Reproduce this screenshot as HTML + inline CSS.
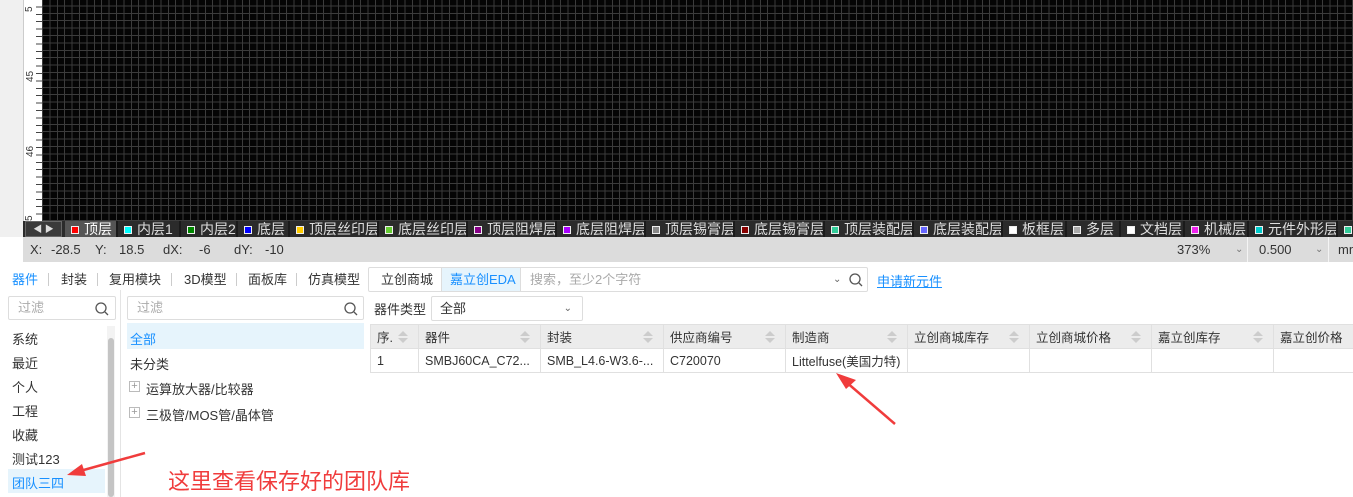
<!DOCTYPE html>
<html><head><meta charset="utf-8"><style>
*{margin:0;padding:0;box-sizing:border-box}
body{width:1353px;height:497px;overflow:hidden;background:#fff;font-family:"Liberation Sans","Noto Sans CJK SC",sans-serif;font-size:13px;color:#333;position:relative}
.a{position:absolute}
#canvas{left:42px;top:0;width:1311px;height:221px;background-color:#050505;
background-image:repeating-linear-gradient(90deg,#3c3c3c 0 1px,transparent 1px 7.4px),repeating-linear-gradient(0deg,#3c3c3c 0 1px,transparent 1px 7.4px);}
#layers{left:23px;top:221px;width:1330px;height:16px;background:#2b2b2b;color:#ddd;font-size:14px;line-height:16px;white-space:nowrap}
.t{position:absolute;top:0;height:16px;padding-left:6px;border-right:2px solid #1a1a1a;overflow:hidden}
.t i{display:inline-block;width:8px;height:8px;border:1px solid #eee;margin-right:5px;vertical-align:0}
#status{left:23px;top:237px;width:1330px;height:25px;background:#dcdcdc;font-size:13px;color:#333;line-height:25px}
.inp{border:1px solid #ddd;border-radius:2px;color:#aaa;padding-left:9px;line-height:22px}
.li{position:absolute;left:12px;font-size:13px}
th,td{border:1px solid #e0e0e0;font-weight:normal;text-align:left;padding-left:6px;height:24px;font-size:12.5px;white-space:nowrap}
th{background:#ececec;color:#333;position:relative}
.sort{position:absolute;right:10px;top:6px;width:0;height:0;border-left:5px solid transparent;border-right:5px solid transparent;border-bottom:5px solid #ccc}
.sort:after{content:"";position:absolute;left:-5px;top:7px;border-left:5px solid transparent;border-right:5px solid transparent;border-top:5px solid #ccc}
.tab{position:absolute;top:271px;font-size:13px;line-height:17px}
.sep{position:absolute;top:273px;width:1px;height:13px;background:#ccc}
</style></head><body>
<div class="a" style="left:0;top:0;width:23px;height:237px;background:#f0f0f0"></div>
<div class="a" style="left:23px;top:0;width:19px;height:221px;background:#fff;border-left:1px solid #ccc;background-image:repeating-linear-gradient(180deg,transparent 0 6.4px,#444 6.4px 7.4px);background-size:6px 100%;background-repeat:repeat-y;background-position:right 0"></div>
<div class="a" style="left:24px;top:12px;font-size:10px;transform:rotate(-90deg);transform-origin:left top;color:#333">5</div>
<div class="a" style="left:25px;top:82px;font-size:10px;transform:rotate(-90deg);transform-origin:left top;color:#333">45</div>
<div class="a" style="left:25px;top:157px;font-size:10px;transform:rotate(-90deg);transform-origin:left top;color:#333">46</div>
<div class="a" style="left:24px;top:221px;font-size:10px;transform:rotate(-90deg);transform-origin:left top;color:#333">5</div>
<div id="canvas" class="a"></div>
<div id="layers" class="a">
<div class="t" style="left:2px;width:37px;padding:0;border:1px solid #666;background:#3a3a3a;font-size:9px;text-align:center;line-height:14px">◀ ▶</div>
<div class="t" style="left:42px;width:53px;background:#555;color:#fff"><i style="background:#f00"></i>顶层</div>
<div class="t" style="left:95px;width:63px"><i style="background:#0ff"></i>内层1</div>
<div class="t" style="left:158px;width:57px"><i style="background:#080"></i>内层2</div>
<div class="t" style="left:215px;width:52px"><i style="background:#00f"></i>底层</div>
<div class="t" style="left:267px;width:89px"><i style="background:#fc0"></i>顶层丝印层</div>
<div class="t" style="left:356px;width:89px"><i style="background:#6c3"></i>底层丝印层</div>
<div class="t" style="left:445px;width:89px"><i style="background:#808"></i>顶层阻焊层</div>
<div class="t" style="left:534px;width:89px"><i style="background:#a0f"></i>底层阻焊层</div>
<div class="t" style="left:623px;width:89px"><i style="background:#888"></i>顶层锡膏层</div>
<div class="t" style="left:712px;width:90px"><i style="background:#800"></i>底层锡膏层</div>
<div class="t" style="left:802px;width:89px"><i style="background:#3c9"></i>顶层装配层</div>
<div class="t" style="left:891px;width:89px"><i style="background:#66f"></i>底层装配层</div>
<div class="t" style="left:980px;width:64px"><i style="background:#fff"></i>板框层</div>
<div class="t" style="left:1044px;width:54px"><i style="background:#aaa"></i>多层</div>
<div class="t" style="left:1098px;width:64px"><i style="background:#fff"></i>文档层</div>
<div class="t" style="left:1162px;width:64px"><i style="background:#e2e"></i>机械层</div>
<div class="t" style="left:1226px;width:89px"><i style="background:#0cc"></i>元件外形层</div>
<div class="t" style="left:1315px;width:20px"><i style="background:#3c9"></i></div>
</div>
<div id="status" class="a">
<span class="a" style="left:7px">X:</span><span class="a" style="left:28px">-28.5</span>
<span class="a" style="left:72px">Y:</span><span class="a" style="left:96px">18.5</span>
<span class="a" style="left:140px">dX:</span><span class="a" style="left:176px">-6</span>
<span class="a" style="left:211px">dY:</span><span class="a" style="left:242px">-10</span>
<span class="a" style="left:1154px">373%</span><span class="a" style="left:1212px;font-size:10px;color:#777">⌄</span>
<div class="a" style="left:1224px;top:0;width:1px;height:25px;background:#f4f4f4"></div>
<span class="a" style="left:1236px">0.500</span><span class="a" style="left:1292px;font-size:10px;color:#777">⌄</span>
<div class="a" style="left:1305px;top:0;width:1px;height:25px;background:#f4f4f4"></div>
<span class="a" style="left:1315px">mm</span>
</div>
<!-- tabs row -->
<span class="tab" style="left:12px;color:#1890ff">器件</span><div class="sep" style="left:48px"></div>
<span class="tab" style="left:61px">封装</span><div class="sep" style="left:97px"></div>
<span class="tab" style="left:109px">复用模块</span><div class="sep" style="left:171px"></div>
<span class="tab" style="left:184px">3D模型</span><div class="sep" style="left:236px"></div>
<span class="tab" style="left:248px">面板库</span><div class="sep" style="left:296px"></div>
<span class="tab" style="left:308px">仿真模型</span>
<div class="a" style="left:368px;top:267px;width:500px;height:25px;border:1px solid #ddd;border-radius:2px;line-height:23px">
<span class="a" style="left:12px">立创商城</span>
<div class="a" style="left:72px;top:0;width:80px;height:23px;background:#e6f4fc;color:#1890ff;padding-left:8px;border-left:1px solid #ddd;border-right:1px solid #ddd">嘉立创EDA</div>
<span class="a" style="left:161px;color:#aaa">搜索，至少2个字符</span>
<span class="a" style="left:464px;font-size:10px;color:#666">⌄</span>
<svg class="a" style="left:480px;top:5px" width="14" height="14"><circle cx="6" cy="6" r="5" fill="none" stroke="#555" stroke-width="1.3"/><path d="M10 10l3 3" stroke="#555" stroke-width="1.3"/></svg>
</div>
<span class="a" style="left:877px;top:271px;color:#1890ff;text-decoration:underline">申请新元件</span>
<!-- left -->
<div class="a inp" style="left:8px;top:296px;width:108px;height:24px">过滤</div>
<svg class="a" style="left:95px;top:302px" width="14" height="14"><circle cx="6" cy="6" r="5" fill="none" stroke="#555" stroke-width="1.3"/><path d="M10 10l3 3" stroke="#555" stroke-width="1.3"/></svg>
<div class="a" style="left:107px;top:326px;width:8px;height:171px;background:#f3f3f3"></div>
<div class="a" style="left:108px;top:338px;width:6px;height:159px;background:#c4c4c4;border-radius:3px"></div>
<div class="a" style="left:120px;top:290px;width:1px;height:207px;background:#e4e4e4"></div>
<span class="li" style="top:329px">系统</span>
<span class="li" style="top:353px">最近</span>
<span class="li" style="top:377px">个人</span>
<span class="li" style="top:401px">工程</span>
<span class="li" style="top:425px">收藏</span>
<span class="li" style="top:449px">测试123</span>
<div class="a" style="left:8px;top:469px;width:97px;height:24px;background:#e6f4fc"></div>
<span class="li" style="top:473px;color:#1890ff">团队三四</span>
<!-- middle -->
<div class="a inp" style="left:127px;top:296px;width:237px;height:24px">过滤</div>
<svg class="a" style="left:344px;top:302px" width="14" height="14"><circle cx="6" cy="6" r="5" fill="none" stroke="#555" stroke-width="1.3"/><path d="M10 10l3 3" stroke="#555" stroke-width="1.3"/></svg>
<div class="a" style="left:127px;top:323px;width:237px;height:26px;background:#e6f4fc"></div>
<span class="a" style="left:130px;top:329px;color:#1890ff">全部</span>
<span class="a" style="left:130px;top:354px">未分类</span>
<div class="a" style="left:129px;top:381px;width:11px;height:11px;border:1px solid #bbb;font-size:11px;line-height:9px;text-align:center;color:#999">+</div>
<span class="a" style="left:146px;top:379px">运算放大器/比较器</span>
<div class="a" style="left:129px;top:407px;width:11px;height:11px;border:1px solid #bbb;font-size:11px;line-height:9px;text-align:center;color:#999">+</div>
<span class="a" style="left:146px;top:405px">三极管/MOS管/晶体管</span>
<!-- right -->
<span class="a" style="left:374px;top:299px">器件类型</span>
<div class="a" style="left:431px;top:296px;width:152px;height:25px;border:1px solid #ddd;border-radius:2px;padding-left:8px;line-height:23px">全部<span class="a" style="right:10px;font-size:10px;color:#666">⌄</span></div>
<table class="a" style="left:370px;top:324px;border-collapse:collapse;table-layout:fixed;width:990px">
<colgroup><col style="width:48px"><col style="width:122px"><col style="width:123px"><col style="width:122px"><col style="width:122px"><col style="width:122px"><col style="width:122px"><col style="width:122px"><col style="width:87px"></colgroup>
<tr><th>序.<span class="sort"></span></th><th>器件<span class="sort"></span></th><th>封装<span class="sort"></span></th><th>供应商编号<span class="sort"></span></th><th>制造商<span class="sort"></span></th><th>立创商城库存<span class="sort"></span></th><th>立创商城价格<span class="sort"></span></th><th>嘉立创库存<span class="sort"></span></th><th>嘉立创价格</th></tr>
<tr><td>1</td><td>SMBJ60CA_C72...</td><td>SMB_L4.6-W3.6-...</td><td>C720070</td><td>Littelfuse(美国力特)</td><td></td><td></td><td></td><td></td></tr>
</table>
<!-- annotations -->
<svg class="a" style="left:0;top:0" width="1353" height="497">
<path d="M895 424L845 381" stroke="#f03c3c" stroke-width="2.5"/>
<path d="M836 373L856 380L846 389Z" fill="#f03c3c"/>
<path d="M145 453L80 471" stroke="#f03c3c" stroke-width="2.5"/>
<path d="M67 475L82 464L86 476Z" fill="#f03c3c"/>
</svg>
<span class="a" style="left:168px;top:464px;font-size:22px;color:#f03c3c">这里查看保存好的团队库</span>
</body></html>
